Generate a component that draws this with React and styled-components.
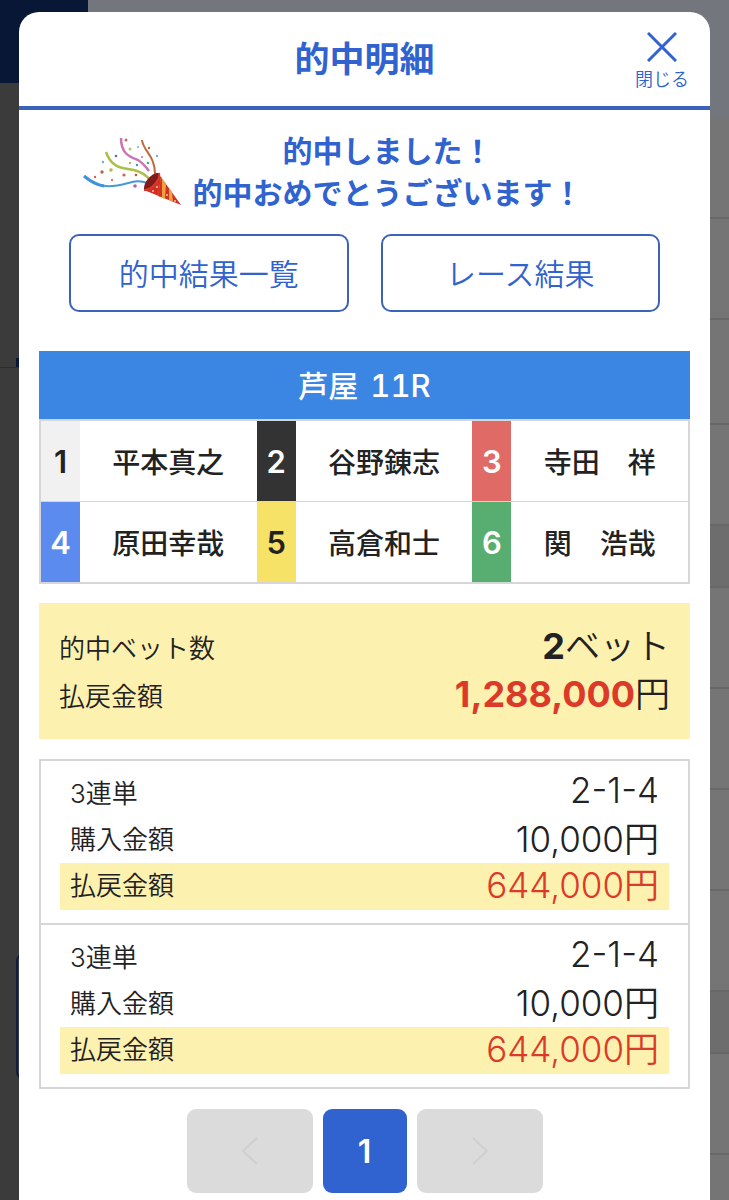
import React from 'react';
import styled, { createGlobalStyle } from 'styled-components';

const GlobalStyle = createGlobalStyle`
  * { box-sizing: border-box; }
  body {
    margin: 0;
    background: #3b3b3b;
    color: #222;
    font-family: Inter, "Noto Sans CJK JP", sans-serif;
  }
  button { font-family: inherit; cursor: pointer; }
  dl, dd, h1, p { margin: 0; }
`;

const blue = '#3063d0';

/* dimmed page behind the dialog */
const Backdrop = styled.div`
  position: fixed;
  inset: 0;
  z-index: -1;
  display: flex;
  justify-content: space-between;
  overflow: hidden;
  background: linear-gradient(90deg, #3b3b3b 50%, #757575 50%);
`;

const BackdropLeft = styled.div`
  width: 88px;
`;

const Logo = styled.div`
  height: 83px;
  background: #081735;
`;

const TabArea = styled.div`
  height: 285px;
  padding-left: 16px;
  display: flex;
  align-items: flex-end;
  border-bottom: 1px solid #2e2e2e;
`;

const TabMark = styled.div`
  flex: 1;
  height: 9px;
  background: #0a1638;
`;

const SideBox = styled.div`
  height: 127px;
  margin: 585px 0 0 16px;
  border: 2px solid #101d45;
  border-radius: 8px;
`;

const BackdropRight = styled.div`
  flex: 1;
`;

const TopBar = styled.div`
  height: 117px;
  background: #73767d;
`;

const Line = styled.div`
  height: ${props => props.size}px;
  background: ${props => (props.$dark ? '#6d6d6d' : '#757575')};
  border-bottom: 2px solid #686868;
`;

const Dialog = styled.main`
  min-height: calc(100vh - 12px);
  margin: 12px 19px 0;
  padding-bottom: 8px;
  background: #fff;
  border-radius: 20px 20px 0 0;
`;

const Header = styled.header`
  display: grid;
  grid-template-columns: 80px 1fr 80px;
  align-items: center;
  height: 98px;
  padding: 0 8px;
  border-bottom: 4px solid #3b64b8;
  color: ${blue};
`;

const Title = styled.h1`
  grid-column: 2;
  font-size: 35px;
  font-weight: 700;
  line-height: 48px;
  text-align: center;
`;

const CloseButton = styled.button`
  display: flex;
  flex-direction: column;
  align-items: center;
  gap: 6px;
  padding: 6px 0 0;
  border: 0;
  background: none;
  color: ${blue};
  font-size: 18px;
  font-weight: 350;
  line-height: 24px;
`;

const Content = styled.div`
  padding: 20px;
`;

const Message = styled.div`
  display: flex;
  justify-content: center;
  gap: 8px;
  padding-right: 64px;
  color: ${blue};
`;

const MessageText = styled.p`
  font-size: 30px;
  font-weight: 700;
  line-height: 42px;
  text-align: center;
  white-space: nowrap;
`;

const Actions = styled.div`
  display: flex;
  gap: 32px;
  margin: 20px 30px 39px;
`;

const OutlineButton = styled.button`
  flex: 1;
  height: 78px;
  padding: 0 0 2px;
  border: 2px solid #3b64b8;
  border-radius: 10px;
  background: #fff;
  color: ${blue};
  font-size: 30px;
  font-weight: 350;
`;

const RaceTable = styled.table`
  width: 100%;
  table-layout: fixed;
  border: 2px solid #d6d6d8;
  border-spacing: 0;
`;

const RaceName = styled.caption`
  height: 68px;
  background: #3b86e3;
  color: #fff;
  font-size: 30px;
  font-weight: 500;
  line-height: 70px;
`;

const RaceNumber = styled.span`
  margin-left: 4px;
  font-size: 31px;
  font-variant-numeric: tabular-nums;
`;

const BoatNumber = styled.th`
  width: 39px;
  height: 80px;
  padding: 0;
  background: ${props => props.$bg};
  color: ${props => props.$fg};
  font-size: 31px;
  font-weight: 600;

  tr + tr > & { border-top: 1px solid #d6d6d8; height: 81px; }
`;

const Racer = styled.td`
  padding: 0;
  font-size: 28px;
  font-weight: 500;
  text-align: center;
  white-space: pre;

  tr + tr > & { border-top: 1px solid #d6d6d8; }
`;

const Row = styled.div`
  display: flex;
  align-items: center;
  justify-content: space-between;
  height: ${props => (props.$highlight ? 47 : 46)}px;
  padding: 0 10px 8px;
  background: ${props => (props.$highlight ? '#fdf1b0' : 'transparent')};
`;

const Label = styled.dt`
  padding-top: 2px;
  font-size: 26px;
  font-weight: 350;
`;

const Value = styled.dd`
  color: ${props => (props.$red ? '#dc3a28' : 'inherit')};
  font-size: 35px;
  font-weight: 350;
`;

const Strong = styled.strong`
  color: ${props => (props.$red ? '#dc3a28' : 'inherit')};
  font-size: 36px;
  font-weight: 700;
`;

const Summary = styled.dl`
  margin: 19px 0 20px;
  padding: 18px 20px 22px;
  background: #fdf1b0;

  ${Row} { height: 48px; padding: 0 0 4px; }
  ${Label} { padding-top: 6px; }
`;

const BetList = styled.div`
  border: 2px solid #d6d6d8;
`;

const Bet = styled.dl`
  padding: 10px 19px 13px;

  & + & { border-top: 2px solid #d6d6d8; }
`;

const Pagination = styled.nav`
  display: flex;
  justify-content: center;
  gap: 10px;
`;

const PageButton = styled.button`
  display: flex;
  align-items: center;
  justify-content: center;
  width: ${props => (props.$current ? 84 : 126)}px;
  height: 84px;
  padding: 0;
  border: 0;
  border-radius: 9px;
  background: ${props => (props.$current ? blue : '#dbdbdb')};
  color: ${props => (props.$current ? '#fff' : '#cfcfcf')};
  font-size: 32px;
  font-weight: 600;
`;

const lines = [
  { size: 102 },
  { size: 101 },
  { size: 105 },
  { size: 101 },
  { size: 62, dark: true },
  { size: 101 },
  { size: 101 },
  { size: 101 },
  { size: 101 },
  { size: 62, dark: true },
  { size: 101 },
];

const racers = [
  [
    { no: 1, name: '平本真之', bg: '#f1f1f1', fg: '#222' },
    { no: 2, name: '谷野錬志', bg: '#333', fg: '#fff' },
    { no: 3, name: '寺田　祥', bg: '#e06a66', fg: '#fff' },
  ],
  [
    { no: 4, name: '原田幸哉', bg: '#5b8bee', fg: '#fff' },
    { no: 5, name: '高倉和士', bg: '#f6e267', fg: '#222' },
    { no: 6, name: '関　浩哉', bg: '#58ae70', fg: '#fff' },
  ],
];

const bets = [
  { type: '3連単', numbers: '2-1-4', paid: '10,000円', payout: '644,000円' },
  { type: '3連単', numbers: '2-1-4', paid: '10,000円', payout: '644,000円' },
];

const confetti = [
  [44, 14, '#c0705a', 1.5], [48, 23, '#b4c860', 1.5], [56, 21, '#6fb7a0', 1],
  [34, 30, '#5a6fa0', 1.3], [21, 36, '#6fa8dc', 1.2], [67, 22, '#b06a50', 1.2],
  [75, 30, '#6fb7d0', 1.2], [60, 31, '#c86fa8', 1], [48, 37, '#a9bf4a', 1.2],
  [55, 39, '#4a90b8', 1.2], [66, 37, '#4aa878', 1.3], [20, 46, '#c0604a', 1.7],
  [29, 44, '#a9bf4a', 1.8], [13, 51, '#d0605a', 1.2], [30, 54, '#e07a70', 1.2],
  [42, 49, '#d0604a', 1.6], [54, 49, '#c0504a', 1.3], [53, 60, '#b25fb0', 1.8],
];

const Popper = () => (
  <svg width="102" height="84" viewBox="1 4 102 84" aria-hidden="true">
    <g fill="none" strokeLinecap="butt">
      <path d="M3 51C20 66 38 59 50 56C58 54 64 56 69 59" stroke="#4599d3" strokeWidth="2" />
      <path d="M2 50C8 55 14 59 22 60" stroke="#3d94d8" strokeWidth="3" />
      <path d="M24 26C30 43 41 42 52 44C60 46 64 49 68 54" stroke="#aebf47" strokeWidth="2.5" />
      <path d="M39 12C39 29 49 31 56 34C61 37 64 41 67 45" stroke="#ca75b2" strokeWidth="2.5" />
      <path d="M60 14C61 25 73 29 73 48" stroke="#bf6a3d" strokeWidth="2" />
    </g>
    {confetti.map(([x, y, color, r], index) => (
      <circle key={index} cx={x} cy={y} r={r} fill={color} />
    ))}
    <path d="M62 64L76 47L99 79Z" fill="#d22f25" />
    <path d="M79 51L84 58L83 73L76 70Z" fill="#eda13c" />
    <path d="M80 54L80 71L76 70L79 51Z" fill="#d22f25" />
    <path d="M87 62L90 66L91 76L87 74Z" fill="#eda13c" />
    <path d="M62 64C61 56 70 46 77 47C79 53 70 64 62 64Z" fill="#82191a" />
    <path d="M62 64C70 64 79 53 77 47" fill="none" stroke="#d9382c" strokeWidth="2" />
    <g fill="#f5c7a2">
      <circle cx="75" cy="61" r="1" />
      <circle cx="71" cy="65" r="1" />
      <circle cx="85" cy="69" r="1" />
      <circle cx="93" cy="75" r="1" />
    </g>
  </svg>
);

const Chevron = ({ d }) => (
  <svg width="20" height="30" viewBox="0 0 20 30" fill="none" stroke="currentColor" strokeWidth="2" aria-hidden="true">
    <path d={d} />
  </svg>
);

const App = () => {
  return (
    <>
      <GlobalStyle />
      <Backdrop aria-hidden="true">
        <BackdropLeft>
          <Logo />
          <TabArea><TabMark /></TabArea>
          <SideBox />
        </BackdropLeft>
        <BackdropRight>
          <TopBar />
          {lines.map((line, index) => (
            <Line key={index} size={line.size} $dark={line.dark} />
          ))}
        </BackdropRight>
      </Backdrop>

      <Dialog>
        <Header>
          <Title>的中明細</Title>
          <CloseButton type="button">
            <svg width="30" height="30" viewBox="0 0 30 30" fill="none" stroke="currentColor" strokeWidth="3" aria-hidden="true">
              <path d="M1 1L29 29M29 1L1 29" />
            </svg>
            閉じる
          </CloseButton>
        </Header>

        <Content>
          <Message>
            <Popper />
            <MessageText>
              的中しました！<br />
              的中おめでとうございます！
            </MessageText>
          </Message>

          <Actions>
            <OutlineButton type="button">的中結果一覧</OutlineButton>
            <OutlineButton type="button">レース結果</OutlineButton>
          </Actions>

          <RaceTable>
            <RaceName>芦屋 <RaceNumber>11R</RaceNumber></RaceName>
            <colgroup>
              {racers[0].map(item => (
                <React.Fragment key={item.no}>
                  <col width="39" />
                  <col />
                </React.Fragment>
              ))}
            </colgroup>
            <tbody>
              {racers.map((group, index) => (
                <tr key={index}>
                  {group.map(item => (
                    <React.Fragment key={item.no}>
                      <BoatNumber scope="row" $bg={item.bg} $fg={item.fg}>{item.no}</BoatNumber>
                      <Racer>{item.name}</Racer>
                    </React.Fragment>
                  ))}
                </tr>
              ))}
            </tbody>
          </RaceTable>

          <Summary>
            <Row>
              <Label>的中ベット数</Label>
              <Value><Strong>2</Strong>ベット</Value>
            </Row>
            <Row>
              <Label>払戻金額</Label>
              <Value><Strong $red>1,288,000</Strong>円</Value>
            </Row>
          </Summary>

          <BetList>
            {bets.map((bet, index) => (
              <Bet key={index}>
                <Row>
                  <Label>{bet.type}</Label>
                  <Value>{bet.numbers}</Value>
                </Row>
                <Row>
                  <Label>購入金額</Label>
                  <Value>{bet.paid}</Value>
                </Row>
                <Row $highlight>
                  <Label>払戻金額</Label>
                  <Value $red>{bet.payout}</Value>
                </Row>
              </Bet>
            ))}
          </BetList>
        </Content>

        <Pagination aria-label="ページ">
          <PageButton type="button" aria-label="前へ">
            <Chevron d="M17 2L3 15L17 28" />
          </PageButton>
          <PageButton type="button" $current aria-current="page">1</PageButton>
          <PageButton type="button" aria-label="次へ">
            <Chevron d="M3 2L17 15L3 28" />
          </PageButton>
        </Pagination>
      </Dialog>
    </>
  );
};

export default App;
